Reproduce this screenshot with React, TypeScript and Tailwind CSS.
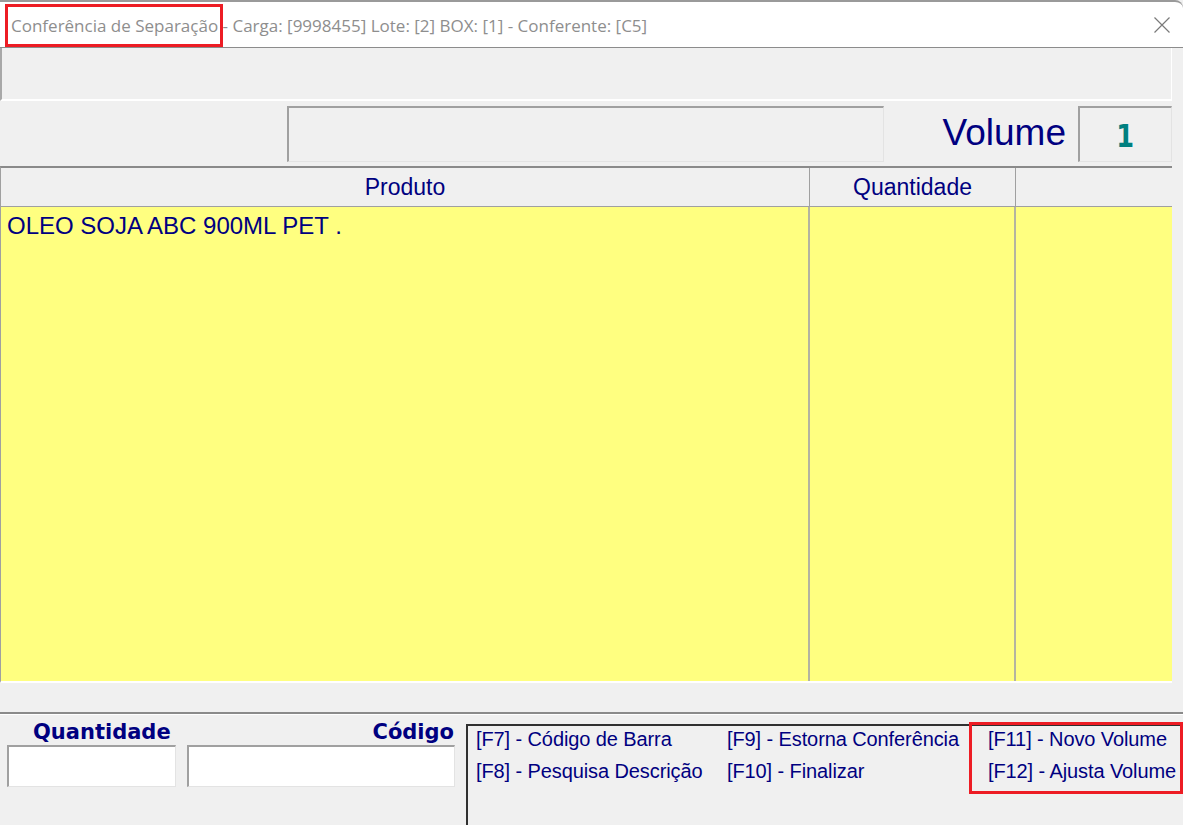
import React from 'react';

const navy = 'text-[#000080]';

function Sunken({ className = '', children }: { className?: string; children?: React.ReactNode }) {
  return (
    <div className={`border-t-2 border-l-2 border-t-[#a0a0a0] border-l-[#a0a0a0] border-b border-r border-b-[#e3e3e3] border-r-[#e3e3e3] ${className}`}>
      {children}
    </div>
  );
}

export default function App() {
  return (
    <div className="w-[1183px] h-[825px] bg-[#f0f0f0] overflow-hidden relative flex flex-col" style={{ fontFamily: '"Liberation Sans", Arial, sans-serif' }}>
      {/* Title bar */}
      <div className="h-[48px] shrink-0 bg-white border-t-2 border-[#9a9a9a] border-b border-b-[#8c8c8c] rounded-tr-lg flex items-center justify-between pl-[11px] pr-[12px]">
        <span className="text-[17px] text-[#8e8e8e] mt-[3px]" style={{ fontFamily: '"Open Sans", "Noto Sans", sans-serif' }}>
          Conferência de Separação - Carga: [9998455] Lote: [2] BOX: [1] - Conferente: [C5]
        </span>
        <svg width="18" height="18" viewBox="0 0 18 18" className="mt-[1px]">
          <path d="M1.5 1.5 L16.5 16.5 M16.5 1.5 L1.5 16.5" stroke="#7a7a7a" strokeWidth="1.2" fill="none" />
        </svg>
      </div>

      {/* Upper area */}
      <div className="flex">
        <div className="w-[1172px] flex flex-col">
          {/* empty panel */}
          <div className="h-[53px] border-l-2 border-l-[#a8a8a8] border-b-2 border-b-white border-r border-r-white" />
          {/* search + volume row */}
          <div className="h-[65px] flex items-start pt-[5px]">
            <Sunken className="ml-[287px] w-[597px] h-[56px] bg-[#f0f0f0]" />
            <div className={`ml-auto mr-[12px] mt-[8px] text-[37px] leading-none ${navy}`}>Volume</div>
            <Sunken className="w-[94px] h-[56px] flex items-center justify-center">
              <span className="text-[32px] font-bold text-[#008080] leading-none mt-[2px]" style={{ fontFamily: '"DejaVu Sans", sans-serif', transform: 'scaleX(0.8)' }}>1</span>
            </Sunken>
          </div>
          {/* grid */}
          <div className="h-[517px] border-t-2 border-t-[#8a8a8a] border-l border-l-[#a0a0a0] border-b-2 border-b-white flex flex-col">
            <div className={`h-[39px] shrink-0 flex border-b border-b-[#a0a0a0] text-[23px] ${navy}`}>
              <div className="w-[809px] flex items-center justify-center border-r border-r-[#a0a0a0]">Produto</div>
              <div className="w-[206px] flex items-center justify-center border-r border-r-[#a0a0a0]">Quantidade</div>
              <div className="flex-1" />
            </div>
            <div className="flex-1 bg-[#ffff80] flex">
              <div className={`w-[809px] border-r-2 border-r-[#b4b4a0] pl-[6px] pt-[5px] text-[24px] leading-[28px] ${navy}`}>
                OLEO SOJA ABC 900ML PET .
              </div>
              <div className="w-[206px] border-r-2 border-r-[#b4b4a0]" />
              <div className="flex-1" />
            </div>
          </div>
        </div>
        <div className="flex-1" />
      </div>

      {/* separator */}
      <div className="h-[29px] shrink-0" />
      <div className="h-[2px] shrink-0 bg-[#8a8a8a] border-b border-b-white box-content" />

      {/* Bottom area */}
      <div className="flex-1 flex">
        <div className="w-[466px] flex flex-col pt-[5px]">
          <div className="flex font-bold text-[21px] leading-[24px] text-[#000080]" style={{ fontFamily: '"DejaVu Sans", sans-serif' }}>
            <div className="w-[187px] pl-[33px]">Quantidade</div>
            <div className="w-[267px] text-right">Código</div>
          </div>
          <div className="flex mt-[1px]">
            <Sunken className="ml-[7px] w-[169px] h-[42px] bg-white" />
            <Sunken className="ml-[11px] w-[268px] h-[42px] bg-white" />
          </div>
        </div>
        <div className="flex-1 mt-[9px] border-t-2 border-l-2 border-t-[#303030] border-l-[#303030] pl-[8px] pt-[1px]">
          <div className={`grid grid-cols-[251px_261px_1fr] gap-y-[8px] text-[20px] leading-[24px] tracking-[-0.1px] ${navy}`}>
            <div>[F7] - Código de Barra</div>
            <div>[F9] - Estorna Conferência</div>
            <div>[F11] - Novo Volume</div>
            <div>[F8] - Pesquisa Descrição</div>
            <div>[F10] - Finalizar</div>
            <div>[F12] - Ajusta Volume</div>
          </div>
        </div>
      </div>

      {/* red highlight marks */}
      <div className="absolute left-[5px] top-[4px] w-[218px] h-[43px] border-[3px] border-[#ed1c24]" />
      <div className="absolute left-[969px] top-[722px] w-[214px] h-[72px] border-[3px] border-[#ed1c24]" />
    </div>
  );
}
